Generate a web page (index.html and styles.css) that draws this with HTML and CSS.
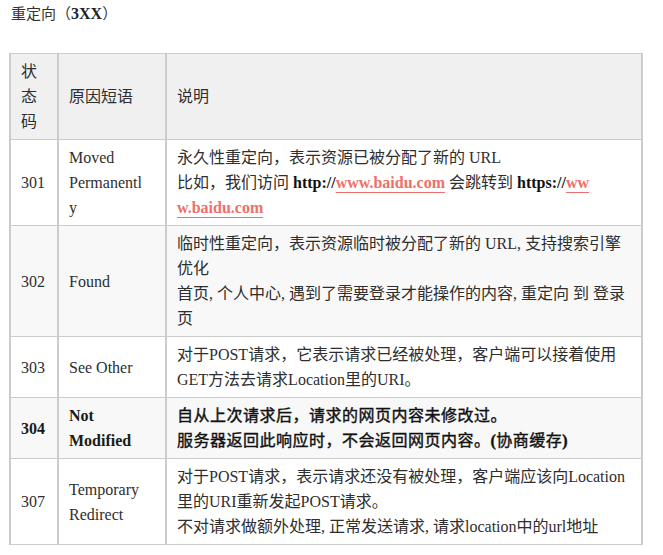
FILE: index.html
```
<!DOCTYPE html>
<html lang="zh-CN">
<head>
<meta charset="utf-8">
<title>重定向（3XX）</title>
<link rel="stylesheet" href="styles.css">
</head>
<body>
<div class="page">
  <h3 class="title">重定向（<b>3XX</b>）</h3>
  <table class="codes">
    <thead>
      <tr>
        <th class="c-code">状态码</th>
        <th class="c-phrase">原因短语</th>
        <th class="c-desc">说明</th>
      </tr>
    </thead>
    <tbody>
      <tr>
        <td class="c-code">301</td>
        <td class="c-phrase">Moved<br>Permanentl<br>y</td>
        <td class="c-desc">永久性重定向，表示资源已被分配了新的 URL<br>比如，我们访问 <b>http://</b><a class="link">www.baidu.com</a> 会跳转到 <b>https://</b><a class="link">ww<br>w.baidu.com</a></td>
      </tr>
      <tr class="alt">
        <td class="c-code">302</td>
        <td class="c-phrase">Found</td>
        <td class="c-desc">临时性重定向，表示资源临时被分配了新的 URL, 支持搜索引擎<br>优化<br>首页, 个人中心, 遇到了需要登录才能操作的内容, 重定向 到 登录<br>页</td>
      </tr>
      <tr>
        <td class="c-code">303</td>
        <td class="c-phrase">See Other</td>
        <td class="c-desc">对于POST请求，它表示请求已经被处理，客户端可以接着使用<br>GET方法去请求Location里的URI。</td>
      </tr>
      <tr class="alt strong">
        <td class="c-code">304</td>
        <td class="c-phrase">Not Modified</td>
        <td class="c-desc">自从上次请求后，请求的网页内容未修改过。<br>服务器返回此响应时，不会返回网页内容。<b>(</b>协商缓存<b>)</b></td>
      </tr>
      <tr>
        <td class="c-code">307</td>
        <td class="c-phrase">Temporary Redirect</td>
        <td class="c-desc">对于POST请求，表示请求还没有被处理，客户端应该向Location<br>里的URI重新发起POST请求。<br>不对请求做额外处理, 正常发送请求, 请求location中的url地址</td>
      </tr>
    </tbody>
  </table>
</div>
</body>
</html>
```

FILE: styles.css
```
html, body {
  margin: 0;
  padding: 0;
  background: #ffffff;
}

.page {
  padding: 2px 9px 0 9px;
  font-family: "Liberation Serif", "Noto Sans CJK SC", serif;
  color: #2e2e2e;
}

.title {
  margin: 0 0 27px 2px;
  font-size: 15px;
  line-height: 24px;
  font-weight: normal;
  color: #333333;
}

.title b {
  font-weight: bold;
  font-size: 16px;
  color: #222222;
}

.codes {
  width: 634px;
  border-collapse: collapse;
  font-size: 16px;
  line-height: 25px;
  table-layout: fixed;
}

.codes th,
.codes td {
  padding: 5px 10px;
  text-align: left;
  vertical-align: middle;
  font-weight: normal;
  border-left: 2px solid #cccccc;
  border-right: 2px solid #cccccc;
  border-top: 1px solid #cccccc;
  border-bottom: 1px solid #cccccc;
  white-space: nowrap;
}

.codes thead th {
  background: #f0f0f0;
  white-space: normal;
}

.c-code {
  width: 26px;
}

.c-phrase {
  width: 86px;
}

.codes td.c-phrase {
  white-space: normal;
}

.codes tr.alt td {
  background: #f8f8f8;
}

.codes tr.strong td.c-code,
.codes tr.strong td.c-phrase {
  font-weight: bold;
  color: #1a1a1a;
}

.codes tr.strong td.c-desc {
  font-weight: normal;
  color: #111111;
  letter-spacing: 0.5px;
  -webkit-text-stroke: 0.4px #111111;
}

.codes b {
  font-weight: bold;
  color: #111111;
}

.link {
  color: #ef6f6a;
  font-weight: bold;
  text-decoration: underline;
  text-decoration-color: #ef6f6a;
  text-decoration-thickness: 1px;
  text-underline-offset: 4px;
}
```
